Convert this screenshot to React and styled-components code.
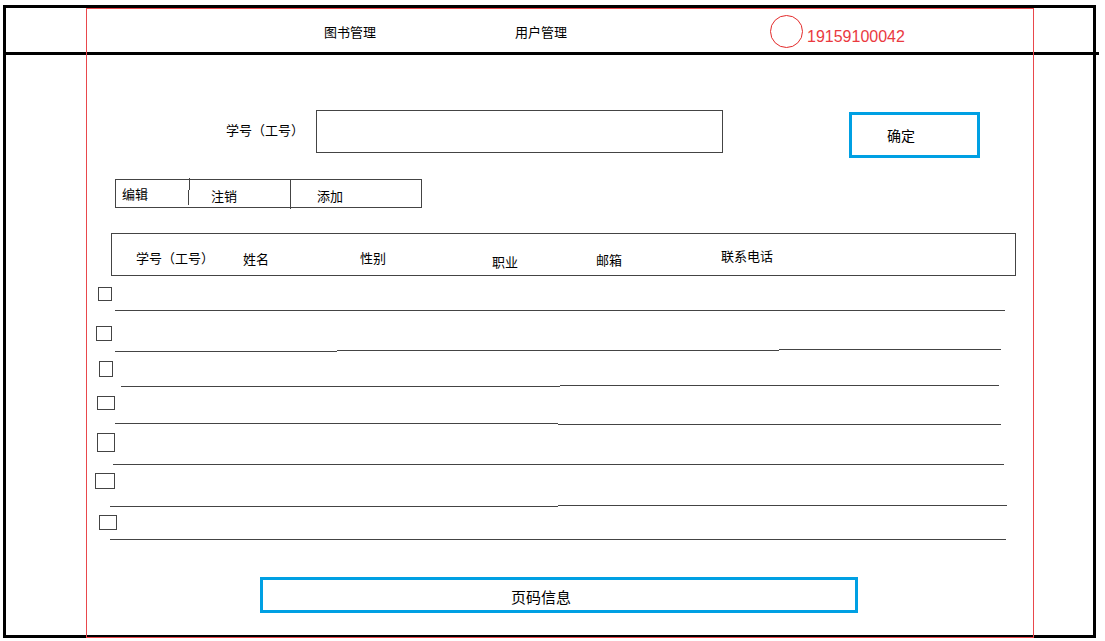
import React from 'react';
import styled, { createGlobalStyle } from 'styled-components';

// left edge of the frame's content box, every x below is a page x
const X0 = 6;

const GlobalStyle = createGlobalStyle`
  html, body {
    margin: 0;
    padding: 0;
    background: #fff;
  }
  body {
    font-family: "Noto Sans CJK SC", "Noto Sans", sans-serif;
    color: #000;
  }
`;

const Frame = styled.div`
  position: relative;
  box-sizing: border-box;
  width: 1093px;
  height: 633px;
  margin: 5px 0 0 3px;
  border: 3px solid #000;
`;

// red layout guide drawn over the page
const Guide = styled.div`
  position: absolute;
  left: 80px;
  top: 0;
  width: 948px;
  height: 630px;
  box-sizing: border-box;
  border: 1px solid #e9474c;
  pointer-events: none;
`;

const Header = styled.header`
  display: flex;
  align-items: flex-start;
  height: 44px;
  margin-right: -6px;
  padding-left: 318px;
  border-bottom: 3px solid #000;
`;

const NavItem = styled.div`
  width: ${p => p.$w}px;
  margin-top: 15px;
  font-size: 13px;
  line-height: 18px;
`;

const Avatar = styled.div`
  width: 33px;
  height: 33px;
  margin-top: 7px;
  box-sizing: border-box;
  border: 1px solid #e32a2a;
  border-radius: 50%;
`;

const Phone = styled.div`
  margin: 20px 0 0 4px;
  font-family: "Liberation Sans", Arial, sans-serif;
  font-size: 16px;
  line-height: 18px;
  color: #ea3a3f;
`;

const SearchRow = styled.div`
  display: flex;
  align-items: flex-start;
  margin-top: 55px;
  padding-left: ${226 - X0}px;
`;

const Label = styled.div`
  width: ${316 - 226}px;
  margin-top: 11px;
  font-size: 13px;
  line-height: 18px;
`;

const Field = styled.input`
  width: 407px;
  height: 43px;
  box-sizing: border-box;
  margin: 0;
  padding: 0 8px;
  border: 1px solid #444;
  outline: none;
  font: inherit;
`;

const Confirm = styled.div`
  width: 131px;
  height: 46px;
  margin: 2px 0 0 126px;
  box-sizing: border-box;
  padding: 10px 0 0 35px;
  border: 3px solid #00a0e3;
  font-size: 14px;
  line-height: 20px;
`;

const Toolbar = styled.div`
  display: flex;
  align-items: flex-start;
  width: 307px;
  height: 29px;
  margin: 21px 0 0 ${115 - X0}px;
  box-sizing: border-box;
  border: 1px solid #444;
`;

const Tab = styled.div`
  width: ${p => p.$w}px;
  box-sizing: border-box;
  padding: ${p => p.$pt}px 0 0 ${p => p.$pl}px;
  font-size: 13px;
  line-height: 18px;
`;

const Jog = styled.div`
  display: flex;
  flex-direction: column;
  width: 2px;
  margin-top: -2px;
`;

const Piece = styled.div`
  width: 1px;
  height: ${p => p.$h}px;
  margin-left: ${p => p.$x}px;
  background: #444;
`;

const Divider = styled.div`
  width: 1px;
  height: 29px;
  background: #444;
`;

const TableHead = styled.div`
  display: grid;
  grid-template-columns: 107px 117px 132px 104px 125px 1fr;
  align-items: start;
  width: 905px;
  height: 43px;
  margin: 25px 0 0 ${111 - X0}px;
  box-sizing: border-box;
  padding-left: 24px;
  border: 1px solid #444;
`;

const HeadCell = styled.div`
  padding-top: ${p => p.$top}px;
  font-size: 13px;
  line-height: 18px;
  white-space: nowrap;
`;

const Row = styled.div`
  display: grid;
  height: ${p => p.$h}px;
  & > * {
    grid-area: 1 / 1;
    align-self: start;
    justify-self: start;
  }
`;

const Check = styled.div`
  width: ${p => p.$w}px;
  height: ${p => p.$h}px;
  margin: ${p => p.$y}px 0 0 ${p => p.$x - X0}px;
  box-sizing: border-box;
  border: 1px solid #444;
`;

const Rule = styled.div`
  display: flex;
  align-items: flex-start;
  margin-left: ${p => p.$x - X0}px;
`;

const Seg = styled.div`
  width: ${p => p.$w}px;
  height: 1px;
  margin-top: ${p => p.$y}px;
  background: #444;
`;

const Pager = styled.div`
  width: 598px;
  height: 36px;
  margin: 36px 0 0 ${260 - X0}px;
  box-sizing: border-box;
  padding: 7px 0 0 248px;
  border: 3px solid #00a0e3;
  font-size: 15px;
  line-height: 20px;
`;

const columns = [
  { label: '学号（工号）', top: 15 },
  { label: '姓名', top: 16 },
  { label: '性别', top: 15 },
  { label: '职业', top: 19 },
  { label: '邮箱', top: 17 },
  { label: '联系电话', top: 13 },
];

// hand-drawn rows: checkbox box and the underline pieces [x1, x2, y]
const rows = [
  { h: 35, cb: { x: 98, y: 11, w: 14, h: 14 }, segs: [[115, 1005, 34]] },
  { h: 41, cb: { x: 96, y: 15, w: 16, h: 15 }, segs: [[115, 337, 40], [337, 779, 39], [779, 1001, 38]] },
  { h: 35, cb: { x: 99, y: 9, w: 14, h: 16 }, segs: [[121, 560, 34], [560, 999, 33]] },
  { h: 38, cb: { x: 97, y: 9, w: 18, h: 14 }, segs: [[115, 558, 36], [558, 1001, 37]] },
  { h: 40, cb: { x: 97, y: 8, w: 18, h: 19 }, segs: [[113, 1004, 39]] },
  { h: 42, cb: { x: 95, y: 8, w: 20, h: 16 }, segs: [[110, 558, 41], [558, 1007, 40]] },
  { h: 34, cb: { x: 99, y: 8, w: 18, h: 15 }, segs: [[110, 1006, 32]] },
];

export default function App() {
  return (
    <>
      <GlobalStyle />
      <Frame>
        <Header>
          <NavItem $w={191}>图书管理</NavItem>
          <NavItem $w={255}>用户管理</NavItem>
          <Avatar />
          <Phone>19159100042</Phone>
        </Header>

        <SearchRow>
          <Label>学号（工号）</Label>
          <Field type="text" />
          <Confirm>确定</Confirm>
        </SearchRow>

        <Toolbar>
          <Tab $w={72} $pl={6} $pt={5}>编辑</Tab>
          <Jog>
            <Piece $h={12} $x={1} />
            <Piece $h={15} $x={0} />
          </Jog>
          <Tab $w={100} $pl={21} $pt={7}>注销</Tab>
          <Divider />
          <Tab $w={130} $pl={26} $pt={7}>添加</Tab>
        </Toolbar>

        <TableHead>
          {columns.map(c => (
            <HeadCell key={c.label} $top={c.top}>{c.label}</HeadCell>
          ))}
        </TableHead>

        {rows.map((r, i) => (
          <Row key={i} $h={r.h}>
            <Check $x={r.cb.x} $y={r.cb.y} $w={r.cb.w} $h={r.cb.h} />
            <Rule $x={r.segs[0][0]}>
              {r.segs.map(([a, b, y], j) => (
                <Seg key={j} $w={b - a} $y={y} />
              ))}
            </Rule>
          </Row>
        ))}

        <Pager>页码信息</Pager>

        <Guide />
      </Frame>
    </>
  );
}
